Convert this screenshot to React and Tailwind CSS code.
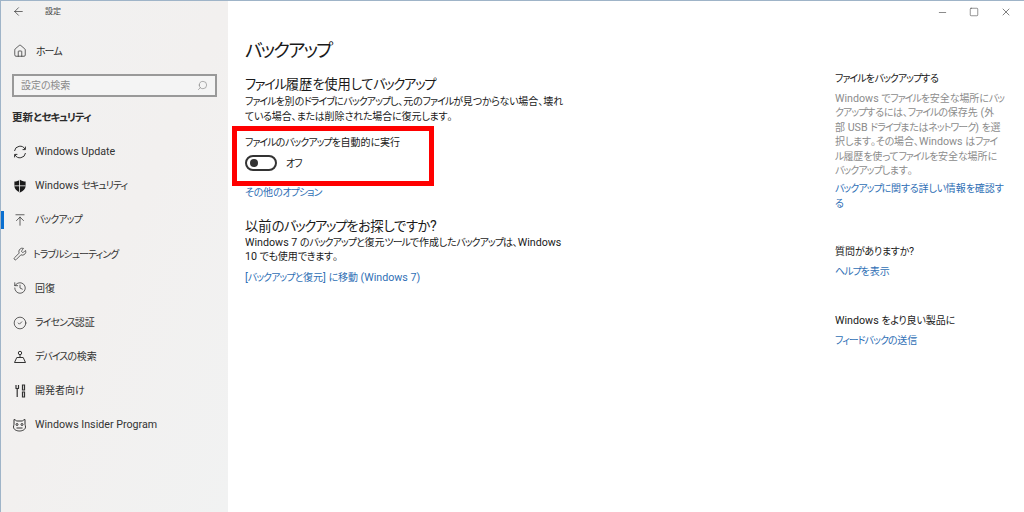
import React from 'react';
import { ArrowLeft, Home, Search, ArrowUpToLine, Wrench, History, CircleCheck, Minus, Square, X } from 'lucide-react';

const fontStack = { fontFamily: 'Roboto, "Noto Sans CJK JP", sans-serif' };

// Windows' UI font has much narrower kana than Noto, so tighten per script
const T = ({ children }) => {
  const runs = children.match(/[\u30A0-\u30FF]+|[\u3040-\u309F]+|[\u4E00-\u9FFF\u3000-\u303F]+|[^\u30A0-\u30FF\u3040-\u309F\u4E00-\u9FFF\u3000-\u303F]+/g) || [];
  return runs.map((run, i) => {
    if (/[\u30A0-\u30FF]/.test(run)) return <span key={i} className="tracking-[-0.1em]">{run}</span>;
    if (/[\u3040-\u309F]/.test(run)) return <span key={i} className="tracking-[-0.03em]">{run}</span>;
    if (/[\u4E00-\u9FFF\u3000-\u303F]/.test(run)) return <span key={i}>{run}</span>;
    return <span key={i} className="text-[1.07em]">{run}</span>;
  });
};

const UpdateIcon = () => (
  <svg width="14" height="14" viewBox="0 0 14 14" fill="none" stroke="#333" strokeWidth="1">
    <path d="M1.500 6A5.600 5.600 0 0 1 12 4.200" />
    <path d="M12.500 8A5.600 5.600 0 0 1 2 9.800" />
    <path d="M12.400 1.600V4.600H9.600" />
    <path d="M1.600 12.400V9.400H4.400" />
  </svg>
);

const ShieldIcon = () => (
  <svg width="14" height="14" viewBox="0 0 14 14">
    <path d="M7 .8C5.400 2 3.400 2.600 1.400 2.600V7c0 3 2.200 5 5.600 6.400C10.400 12 12.600 10 12.600 7V2.600C10.600 2.600 8.600 2 7 .8Z" fill="#1a1a1a" />
    <path d="M6.500 1v12M1.400 6.800h11.200" stroke="#f2f2f2" strokeWidth=".8" />
  </svg>
);

const FindIcon = () => (
  <svg width="14" height="14" viewBox="0 0 14 14" fill="none" stroke="#333" strokeWidth="1">
    <circle cx="7" cy="3" r="1.700" />
    <path d="M7 4.700V8" />
    <path d="M3.800 7.500H10.200L12.500 12.500H1.500Z" />
  </svg>
);

const DevIcon = () => (
  <svg width="14" height="14" viewBox="0 0 14 14" fill="none" stroke="#333" strokeWidth="1.200">
    <path d="M3 1v3.500M5.500 1v3.500M2.500 4.500h3.500M4.200 4.500V13" />
    <path d="M9.500 1h2v5h-2zM9.500 8h2v5h-2z" />
  </svg>
);

const InsiderIcon = () => (
  <svg width="15" height="14" viewBox="0 0 15 14" fill="none" stroke="#333" strokeWidth="1">
    <path d="M2 1.500C3.500 1.500 4 3 5 3h5c1 0 1.500-1.500 3-1.500V6c0 1 .5 1.500.5 3 0 2.500-3 4-6 4s-6-1.500-6-4c0-1.500.5-2 .5-3Z" />
    <circle cx="5" cy="6.500" r="1" />
    <circle cx="10" cy="6.500" r="1" />
    <path d="M4.500 10h6" />
  </svg>
);

const navItems = [
  { label: 'Windows Update', icon: <UpdateIcon /> },
  { label: 'Windows セキュリティ', icon: <ShieldIcon /> },
  { label: 'バックアップ', icon: <ArrowUpToLine size={14} strokeWidth={1.25} />, active: true },
  { label: 'トラブルシューティング', icon: <Wrench size={14} strokeWidth={1.25} />, tight: true },
  { label: '回復', icon: <History size={14} strokeWidth={1.25} /> },
  { label: 'ライセンス認証', icon: <CircleCheck size={14} strokeWidth={1.25} /> },
  { label: 'デバイスの検索', icon: <FindIcon /> },
  { label: '開発者向け', icon: <DevIcon /> },
  { label: 'Windows Insider Program', icon: <InsiderIcon /> },
];

const Sidebar = () => (
  <aside className="w-[227px] shrink-0 flex flex-col bg-gradient-to-br from-[#f1f1f1] via-[#f2f0ef] to-[#f1f2f2] text-[#2b2b2b]">
    <div className="h-[22px] flex items-center pl-[11px]">
      <ArrowLeft size={13} strokeWidth={1.25} className="-mt-[2px]" />
      <span className="ml-[20px] text-[8px] text-[#444]"><T>設定</T></span>
    </div>
    <div className="h-[34px] mt-[11px] flex items-center pl-[12px]">
      <Home size={14} strokeWidth={1.25} />
      <span className="ml-[9px] text-[10px]"><T>ホーム</T></span>
    </div>
    <div className="mt-[6px] mx-[11px] h-[23px] border-2 border-[#999] flex items-center justify-between px-[7px] bg-[#f4f4f4]">
      <span className="text-[10px] text-[#8a8a8a]"><T>設定の検索</T></span>
      <Search size={11} strokeWidth={1.25} className="text-[#777] -scale-x-100" />
    </div>
    <div className="mt-[12px] pl-[11px] text-[10.500px] font-bold leading-[17px]"><T>更新とセキュリティ</T></div>
    <nav className="mt-[8.500px] flex flex-col">
      {navItems.map((item) => (
        <div key={item.label} className="relative h-[34.200px] flex items-center pl-[11px]">
          {item.active && <span className="absolute left-0 top-[8px] w-[3px] h-[18px] bg-[#0a6fd0]" />}
          <span className="w-[15px] flex justify-center">{item.icon}</span>
          <span className={`text-[10px] text-[#333] whitespace-nowrap ${item.tight ? 'ml-[6px]' : 'ml-[8px]'}`}><T>{item.label}</T></span>
        </div>
      ))}
    </nav>
  </aside>
);

const Toggle = () => (
  <div className="w-[32px] h-[16px] rounded-full border-2 border-[#333] flex items-center pl-[3px]">
    <span className="w-[8px] h-[8px] rounded-full bg-[#333]" />
  </div>
);

const MainPanel = () => (
  <main className="w-[590px] shrink-0 pl-[17px] pt-[37px] text-[#1a1a1a]">
    <h1 className="text-[18.500px] leading-[26px]"><T>バックアップ</T></h1>
    <h2 className="mt-[11px] text-[13.300px] leading-[20px]"><T>ファイル履歴を使用してバックアップ</T></h2>
    <p className="text-[10px] leading-[14.500px]">
      <T>ファイルを別のドライブにバックアップし、元のファイルが見つからない場合、壊れ</T>
      <br />
      <T>ている場合、または削除された場合に復元します。</T>
    </p>
    <div className="mt-[11px] text-[10px] leading-[16px]"><T>ファイルのバックアップを自動的に実行</T></div>
    <div className="mt-[4px] flex items-center gap-[9px]">
      <Toggle />
      <span className="text-[10px]"><T>オフ</T></span>
    </div>
    <div className="mt-[14px] text-[10px] leading-[16px] text-[#2f6fb5]"><T>その他のオプション</T></div>
    <h2 className="mt-[15px] text-[13.300px] leading-[20px]"><T>以前のバックアップをお探しですか?</T></h2>
    <p className="text-[10px] leading-[14px] -mt-[1px]">
      <T>Windows 7 のバックアップと復元ツールで作成したバックアップは、Windows</T>
      <br />
      <T>10 でも使用できます。</T>
    </p>
    <div className="mt-[6px] text-[10px] leading-[16px] text-[#2f6fb5]"><T>[バックアップと復元] に移動 (Windows 7)</T></div>
  </main>
);

const RightPanel = () => (
  <section className="flex-1 flex flex-col">
    <div className="h-[22px] flex items-center justify-end gap-[21px] pr-[12px] text-[#333]">
      <Minus size={11} strokeWidth={1.25} />
      <Square size={10} strokeWidth={1.25} />
      <X size={12} strokeWidth={1.25} />
    </div>
    <div className="pl-[17px] pt-[48px] w-[190px]">
      <h3 className="text-[10px] leading-[16px] text-[#1a1a1a]"><T>ファイルをバックアップする</T></h3>
      <p className="mt-[5px] text-[10px] leading-[14.400px] text-[#8c8c8c] whitespace-nowrap">
        <T>Windows でファイルを安全な場所にバッ</T>
        <br />
        <T>クアップするには、ファイルの保存先 (外</T>
        <br />
        <T>部 USB ドライブまたはネットワーク) を選</T>
        <br />
        <T>択します。その場合、Windows はファイ</T>
        <br />
        <T>ル履歴を使ってファイルを安全な場所に</T>
        <br />
        <T>バックアップします。</T>
      </p>
      <p className="mt-[4px] text-[10px] leading-[14.400px] text-[#2f6fb5] whitespace-nowrap">
        <T>バックアップに関する詳しい情報を確認す</T>
        <br />
        <T>る</T>
      </p>
      <h3 className="mt-[33px] text-[10px] leading-[16px] text-[#1a1a1a]"><T>質問がありますか?</T></h3>
      <div className="mt-[4px] text-[10px] leading-[16px] text-[#2f6fb5]"><T>ヘルプを表示</T></div>
      <h3 className="mt-[33px] text-[10px] leading-[16px] text-[#1a1a1a]"><T>Windows をより良い製品に</T></h3>
      <div className="mt-[4px] text-[10px] leading-[16px] text-[#2f6fb5]"><T>フィードバックの送信</T></div>
    </div>
  </section>
);

export default function App() {
  return (
    <div className="relative w-[1024px] h-[512px] overflow-hidden bg-white border-t border-l border-[#9fb4c8] flex [font-feature-settings:'palt']" style={fontStack}>
      <Sidebar />
      <MainPanel />
      <RightPanel />
      {/* red annotation over the toggle */}
      <div className="absolute left-[231px] top-[125px] w-[202px] h-[60px] border-[5px] border-[#ff0000]" />
    </div>
  );
}
